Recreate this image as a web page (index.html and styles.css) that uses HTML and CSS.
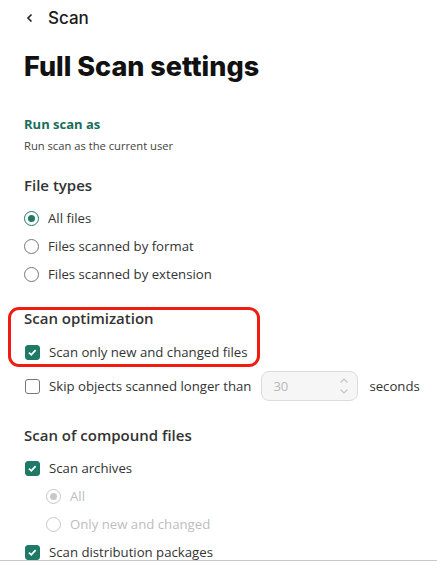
FILE: index.html
```html
<!DOCTYPE html>
<html lang="en">
    <head>
        <meta charset="UTF-8">
        <title>Full Scan settings</title>
        <link rel="stylesheet" href="styles.css">
    </head>
    <body>
        <div class="page">
            <div class="topbar">
                <svg class="back" width="10" height="10" viewBox="0 0 10 10"><path d="M6.5 1.5 L3 5 L6.5 8.5" fill="none" stroke="#222" stroke-width="1.6"/></svg>
                <span>Scan</span>
            </div>
            <h1 class="title">Full Scan settings</h1>

            <div class="link">Run scan as</div>
            <div class="hint">Run scan as the current user</div>

            <h2 class="group first">File types</h2>
            <div class="row"><span class="radio on"></span>All files</div>
            <div class="row"><span class="radio"></span>Files scanned by format</div>
            <div class="row"><span class="radio"></span>Files scanned by extension</div>

            <div class="marked">
                <h2 class="group">Scan optimization</h2>
                <div class="row check-row"><span class="check on"></span>Scan only new and changed files</div>
                <div class="highlight"></div>
            </div>
            <div class="row skip">
                <span class="check"></span>Skip objects scanned longer than
                <div class="spin">
                    <span>30</span>
                    <svg width="10" height="20" viewBox="0 0 10 20"><path d="M1.5 6.5 L5 3 L8.5 6.5 M1.5 13.5 L5 17 L8.5 13.5" fill="none" stroke="#c4c4c4" stroke-width="1.2"/></svg>
                </div>
                <span class="unit">seconds</span>
            </div>

            <h2 class="group compound">Scan of compound files</h2>
            <div class="row"><span class="check on"></span>Scan archives</div>
            <div class="row sub off"><span class="radio on"></span>All</div>
            <div class="row sub off"><span class="radio"></span>Only new and changed</div>
            <div class="row"><span class="check on"></span>Scan distribution packages</div>
        </div>
    </body>
</html>
```

FILE: styles.css
```css
*{
    padding: 0;
    margin: 0;
    box-sizing: border-box;
}
body{
    background: #fff;
    color: #333;
    font-family: "Open Sans", "Noto Sans", sans-serif;
    font-size: 13.2px;
}
.page{
    height: 561px;
    overflow: hidden;
    border-bottom: 1px solid #c8c8c8;
    padding: 0 24px;
}
.topbar{
    height: 36px;
    display: flex;
    align-items: center;
    font-family: Inter, sans-serif;
    font-size: 17px;
    font-weight: 500;
    color: #1a1a1a;
}
.back{
    margin: 0 13px 0 1px;
}
.title{
    margin-top: 15px;
    font-family: Inter, sans-serif;
    font-size: 27px;
    line-height: 32px;
    font-weight: 800;
    color: #111;
}
.link{
    margin-top: 32px;
    font-size: 13px;
    line-height: 18px;
    font-weight: 700;
    color: #1b6e5c;
}
.hint{
    margin-top: 5px;
    font-size: 11.2px;
    line-height: 16px;
    color: #444;
}
.group{
    font-size: 15px;
    line-height: 22px;
    font-weight: 600;
    color: #333;
}
.group.first{
    margin-top: 20px;
    margin-bottom: 8px;
}
.row{
    height: 28px;
    display: flex;
    align-items: center;
    white-space: nowrap;
}
.radio{
    width: 15px;
    height: 15px;
    border: 1px solid #777;
    border-radius: 50%;
    margin-right: 9px;
    display: flex;
    align-items: center;
    justify-content: center;
    flex: none;
}
.radio.on{
    border-color: #1e7a67;
}
.radio.on::after{
    content: "";
    width: 7px;
    height: 7px;
    border-radius: 50%;
    background: #1e7a67;
}
.check{
    width: 15px;
    height: 15px;
    border: 1px solid #777;
    border-radius: 3px;
    margin: 0 9px 0 1px;
    flex: none;
}
.check.on{
    border-color: #1e7a67;
    background: #1e7a67 url("data:image/svg+xml,%3Csvg xmlns='http://www.w3.org/2000/svg' width='15' height='15'%3E%3Cpath d='M4 7.6 L6.3 9.8 L10.6 5.2' fill='none' stroke='white' stroke-width='1.8'/%3E%3C/svg%3E") center/15px no-repeat;
}
.marked{
    position: relative;
    margin-top: 19px;
}
.check-row{
    margin-top: 9px;
}
.highlight{
    position: absolute;
    left: -16px;
    top: 0;
    width: 252px;
    height: 60px;
    border: 3px solid #f01c10;
    border-radius: 11px;
}
.skip{
    height: 34px;
    margin-top: 3px;
}
.spin{
    width: 97px;
    height: 30px;
    margin-left: 10px;
    flex: none;
    border: 1px solid #dcdcdc;
    border-radius: 8px;
    background: #f6f6f6;
    display: flex;
    align-items: center;
    justify-content: space-between;
    padding: 0 8px 0 11px;
    color: #b8b8b8;
    font-size: 13px;
}
.unit{
    margin-left: 11px;
}
.group.compound{
    margin-top: 21px;
    margin-bottom: 8px;
}
.sub{
    padding-left: 22px;
}
.off{
    color: #bdbdbd;
}
.off .radio{
    border-color: #c8c8c8;
}
.off .radio.on::after{
    background: #c8c8c8;
}
```
